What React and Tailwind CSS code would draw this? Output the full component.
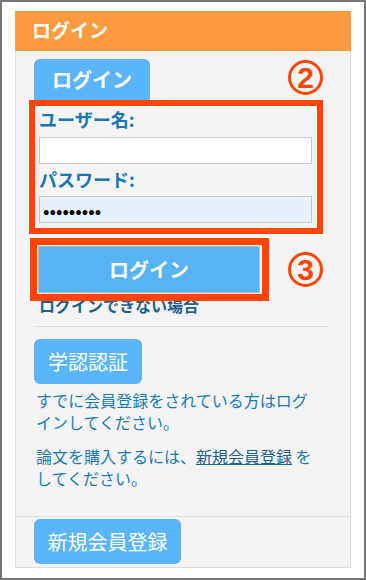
const jp = { fontFamily: '"Noto Sans CJK JP", "Noto Sans", sans-serif' }

const Annotation = ({ className }) => (
  <div className={`absolute border-[#ff4500] pointer-events-none ${className}`} />
)

const Circled = ({ children, className }) => (
  <div
    style={{ fontFamily: '"Liberation Sans", Arial, sans-serif' }}
    className={`absolute w-[35px] h-[35px] rounded-full border-[3px] border-[#ff4500] flex items-center justify-center text-[#ff4500] text-[30px] font-bold leading-none ${className}`}
  >
    {children}
  </div>
)

export default function App() {
  return (
    <div
      style={jp}
      className="relative w-[366px] h-[580px] border-2 border-[#777] bg-white pl-[13px] pt-[9px]"
    >
      <div className="w-[336px] flex flex-col">
        <div className="h-[40px] bg-[#fc9b40] pl-[17px] pb-[2px] flex items-center text-white text-[19px] font-bold">
          ログイン
        </div>

        <div className="border-x border-b border-[#dcdcdc] bg-[#f4f4f4]">
          <div className="pl-[18px] pr-[21px] pt-[8px] pb-[27px]">
            <div className="w-[116px] h-[41px] rounded-t-md bg-[#5bb5fa] flex items-center justify-center text-white text-[20px] font-bold">
              ログイン
            </div>

            <form className="pl-[5px] w-[283px]" onSubmit={(e) => e.preventDefault()}>
              <div className="pt-[6px] leading-[26px] text-[18px] font-bold text-[#1777b5]">
                ユーザー名:
              </div>
              <input
                type="text"
                className="mt-[5px] block w-[273px] h-[27px] bg-white border border-[#c8c8c8] outline-none"
              />
              <div className="leading-[30px] mb-[2px] text-[18px] font-bold text-[#1777b5]">
                パスワード:
              </div>
              <input
                type="password"
                readOnly
                defaultValue="123456789"
                className="block w-[273px] h-[27px] bg-[#e8f0fe] border border-[#c8c8c8] px-[3px] text-[19px] leading-none text-black outline-none"
              />
              <button
                type="submit"
                className="mt-[23px] -ml-[1px] w-[222px] h-[47px] bg-[#57b3f2] border border-[#bdbdbd] shadow-[0_0_0_1px_#eeeeee] text-white text-[20px] font-bold"
              >
                ログイン
              </button>
              <div className="mt-[1px] leading-[22px] text-[16px] font-bold text-[#1f5f8f]">
                ログインできない場合
              </div>
            </form>

            <div className="mt-[10px] border-t border-[#dedede]" />

            <button className="mt-[12px] w-[108px] h-[45px] rounded-md bg-[#5bb5fa] text-white text-[20px]">
              学認認証
            </button>

            <p className="ml-[2px] mt-[5px] w-[282px] text-[16px] leading-[22px] text-[#1a7bb8]">
              すでに会員登録をされている方はログインしてください。
            </p>
            <p className="ml-[2px] mt-[12px] w-[282px] text-[16px] leading-[22px] text-[#1a7bb8]">
              論文を購入するには、
              <a className="underline text-[#1d5f8e]">新規会員登録</a> をしてください。
            </p>
          </div>

          <div className="border-t border-[#dedede] pl-[18px] pt-[2px] pb-[3px]">
            <button className="w-[147px] h-[45px] rounded-md bg-[#5bb5fa] text-white text-[20px]">
              新規会員登録
            </button>
          </div>
        </div>
      </div>

      <Annotation className="left-[27px] top-[98px] w-[294px] h-[134px] border-[6px]" />
      <Annotation className="left-[28px] top-[236px] w-[239px] h-[63px] border-[7px]" />
      <Circled className="left-[286px] top-[58px]">2</Circled>
      <Circled className="left-[286px] top-[250px]">3</Circled>
    </div>
  )
}
